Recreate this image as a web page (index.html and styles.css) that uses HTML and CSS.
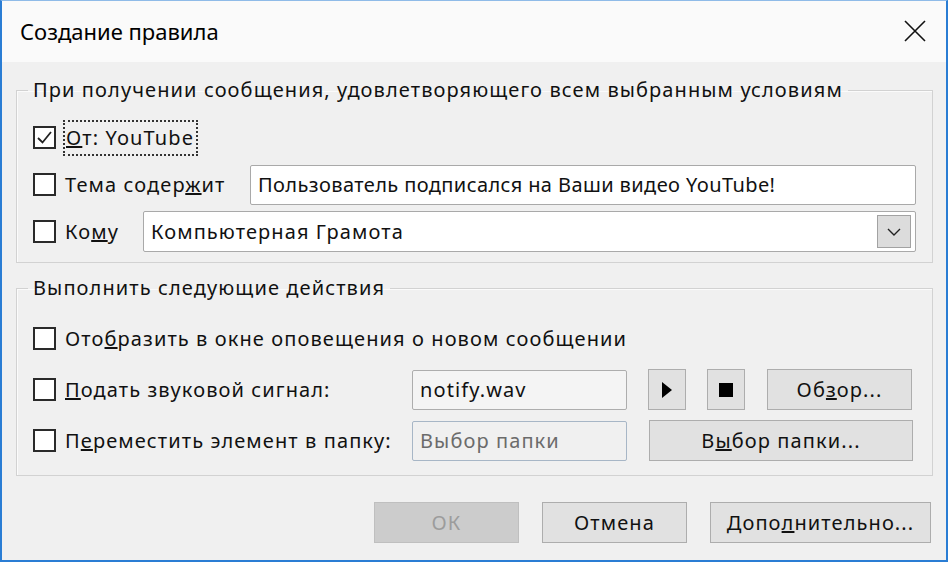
FILE: index.html
```html
<html>
    <head>
        <title>Создание правила</title>
        <link rel="stylesheet" href="styles.css">
    </head>
    <body>
        <div class="window">
            <div class="titlebar">
                <span class="title">Создание правила</span>
                <svg class="close" width="24" height="24" viewBox="0 0 24 24">
                    <path d="M2 2 L22 22 M22 2 L2 22" stroke="#111" stroke-width="1.6" fill="none"/>
                </svg>
            </div>
            <div class="body">
                <fieldset class="group group-cond">
                    <legend>При получении сообщения, удовлетворяющего всем выбранным условиям</legend>
                    <div class="row">
                        <label class="check">
                            <span class="box">
                                <svg width="19" height="19" viewBox="0 0 19 19"><path d="M3 10 L7.5 14.5 L16 4" stroke="#222" stroke-width="1.8" fill="none"/></svg>
                            </span>
                            <span class="focus"><u>О</u>т: YouTube</span>
                        </label>
                    </div>
                    <div class="row">
                        <label class="check lbl-subject">
                            <span class="box"></span>
                            <span>Тема содер<u>ж</u>ит</span>
                        </label>
                        <div class="field grow subject">Пользователь подписался на Ваши видео YouTube!</div>
                    </div>
                    <div class="row">
                        <label class="check lbl-to">
                            <span class="box"></span>
                            <span>Ко<u>м</u>у</span>
                        </label>
                        <div class="field combo grow">
                            <span>Компьютерная Грамота</span>
                            <span class="drop">
                                <svg width="16" height="10" viewBox="0 0 16 10"><path d="M2 2 L8 8 L14 2" stroke="#222" stroke-width="1.4" fill="none"/></svg>
                            </span>
                        </div>
                    </div>
                </fieldset>

                <fieldset class="group group-act">
                    <legend>Выполнить следующие действия</legend>
                    <div class="row">
                        <label class="check">
                            <span class="box"></span>
                            <span>Ото<u>б</u>разить в окне оповещения о новом сообщении</span>
                        </label>
                    </div>
                    <div class="row">
                        <label class="check lbl-action">
                            <span class="box"></span>
                            <span><u>П</u>одать звуковой сигнал:</span>
                        </label>
                        <div class="field readonly short">notify.wav</div>
                        <button class="btn icon-btn">
                            <svg width="12" height="18" viewBox="0 0 12 18"><path d="M1 1 L11 9 L1 17 Z" fill="#000"/></svg>
                        </button>
                        <button class="btn icon-btn">
                            <svg width="14" height="14" viewBox="0 0 14 14"><rect x="0" y="0" width="14" height="14" fill="#000"/></svg>
                        </button>
                        <button class="btn browse">Об<u>з</u>ор...</button>
                    </div>
                    <div class="row">
                        <label class="check lbl-action">
                            <span class="box"></span>
                            <span>П<u>е</u>реместить элемент в папку:</span>
                        </label>
                        <div class="field disabled short">Выбор папки</div>
                        <button class="btn folder">В<u>ы</u>бор папки...</button>
                    </div>
                </fieldset>

                <div class="actions">
                    <button class="btn action" disabled>ОК</button>
                    <button class="btn action">Отмена</button>
                    <button class="btn action wide">Допо<u>л</u>нительно...</button>
                </div>
            </div>
        </div>
    </body>
</html>
```

FILE: styles.css
```css
html, body {
    margin: 0;
    padding: 0;
}
body {
    font-family: "Noto Sans", sans-serif;
    font-size: 20px;
    letter-spacing: 1.1px;
    color: #111;
    background: #f0f0f0;
}
/* Window frame */
.window {
    width: 948px;
    height: 562px;
    box-sizing: border-box;
    border: 2px solid #2a7dd4;
    border-top: 1px solid #8fbbe8;
    background: #f0f0f0;
    display: flex;
    flex-direction: column;
}
.titlebar {
    height: 61px;
    flex: none;
    background: #fafafa;
    display: flex;
    align-items: center;
    justify-content: space-between;
    padding: 0 19px 0 18px;
}
.title {
    font-size: 22px;
    letter-spacing: 0;
    color: #000;
    padding-bottom: 2px;
}
.close {
    margin-top: -1px;
}
.body {
    flex: 1;
}
/* Group boxes */
.group {
    border: 1px solid #d2d2d2;
    box-shadow: inset 1px 1px 0 #fbfbfb;
    margin: 0 13px 0 14px;
    padding: 14px 16px 10px 16px;
    min-width: 0;
}
.group legend {
    line-height: 26px;
    padding: 0 5px;
    margin-left: -5px;
}
.group-cond {
    margin-top: 15px;
}
.group-act {
    margin-top: 12px;
    padding-top: 17px;
    padding-bottom: 14px;
}
.row {
    height: 41px;
    display: flex;
    align-items: center;
}
.group-cond .row + .row {
    margin-top: 6px;
}
.group-act .row + .row {
    margin-top: 10px;
}
/* Checkboxes */
.check {
    display: flex;
    align-items: center;
    flex: none;
    white-space: nowrap;
}
.box {
    width: 19px;
    height: 19px;
    border: 2px solid #2a2a2a;
    background: #fff;
    margin-right: 9px;
    display: flex;
}
.focus {
    outline: 2px dotted #333;
    outline-offset: 0;
    padding: 2px 2px 3px 1px;
}
.lbl-subject {
    width: 217px;
}
.lbl-to {
    width: 110px;
}
.lbl-action {
    width: 379px;
}
/* Inputs */
.field {
    height: 40px;
    box-sizing: border-box;
    border: 1px solid #a9a9a9;
    border-radius: 2px;
    background: #fff;
    padding: 0 7px;
    display: flex;
    align-items: center;
    white-space: nowrap;
}
.grow {
    flex: 1;
}
.subject {
    letter-spacing: 0.4px;
}
.combo {
    height: 41px;
    justify-content: space-between;
    padding-right: 4px;
}
.drop {
    width: 32px;
    height: 31px;
    background: #dcdcdc;
    border: 1px solid #a2a2a2;
    display: flex;
    align-items: center;
    justify-content: center;
}
.short {
    width: 215px;
    flex: none;
}
.readonly {
    background: #f4f4f4;
    border-color: #adadad;
}
.disabled {
    background: #f0f0f0;
    border-color: #a7b6c6;
    color: #6b6b6b;
}
/* Buttons */
.btn {
    font-family: "Noto Sans", sans-serif;
    font-size: 20px;
    letter-spacing: 1.1px;
    color: #111;
    background: #e1e1e1;
    border: 1px solid #adadad;
    height: 41px;
    padding: 0;
    display: flex;
    align-items: center;
    justify-content: center;
    flex: none;
}
.icon-btn {
    width: 38px;
    margin-left: 21px;
}
.browse {
    width: 145px;
    margin-left: 22px;
}
.folder {
    width: 264px;
    margin-left: 22px;
}
.btn:disabled {
    background: #cccccc;
    border-color: #bfbfbf;
    color: #9c9c9c;
}
.actions {
    display: flex;
    justify-content: flex-end;
    gap: 23px;
    margin-top: 26px;
    padding-right: 15px;
}
.action {
    width: 145px;
}
.action.wide {
    width: 221px;
}
```
